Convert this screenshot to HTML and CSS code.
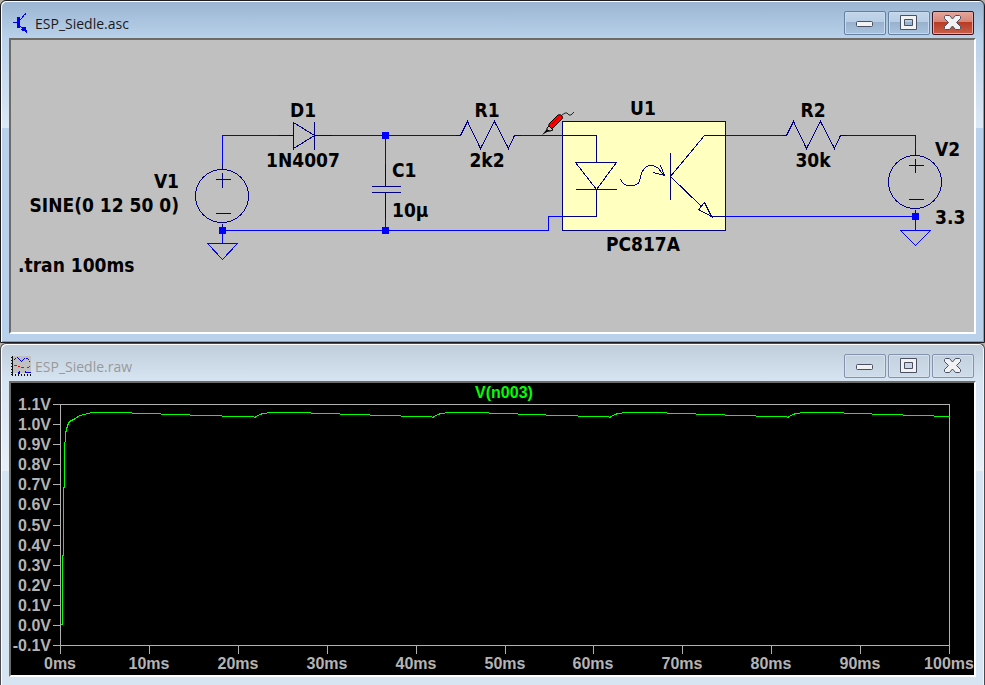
FILE: index.html
```html
<!DOCTYPE html>
<html lang="en">
<head>
<meta charset="utf-8">
<title>ESP_Siedle</title>
<link rel="stylesheet" href="styles.css">
</head>
<body>
<main class="desktop">
  <section class="window window-active">
    <header class="titlebar">
      <svg class="app-icon" viewBox="0 0 20 20" aria-hidden="true">
        <g fill="#0000f0" shape-rendering="crispEdges">
          <path d="M2 9h5v1H2zM6 4h3v11H6zM9 6h1v1H9zM10 5h1v1h-1zM11 4h1v1h-1zM11 3h2v1h-2zM12 2h1v1h-1zM13 1h2v1h-2zM14 0h1v1h-1z"/>
          <path d="M9 13h1v1H9zM10 14h2v1h-2zM11 14h3v4h-3zM10 16h2v1h-2zM14 15h1v4h-1zM15 17h1v3h-1zM13 17h2v1h-2zM14 14h1v1h-1z"/>
        </g>
      </svg>
      <h1 class="title">ESP_Siedle.asc</h1>
      <div class="controls">
        <button class="control" type="button" aria-label="Minimize"><svg viewBox="0 0 42 24"><rect x="12.500" y="10.500" width="16" height="5" rx="1" class="glyph"/></svg></button>
        <button class="control" type="button" aria-label="Maximize"><svg viewBox="0 0 42 24"><path class="glyph" fill-rule="evenodd" d="M12.500 4.500h16v14h-16zM16.500 8.500h8v6h-8z"/></svg></button>
        <button class="control close" type="button" aria-label="Close"><svg viewBox="0 0 42 24"><path class="glyph" d="M13.500 4.500h4l3 3.500 3-3.500h4l1 1v2l-4 4 4 4v2l-1 1h-4l-3-3.500-3 3.500h-4l-1-1v-2l4-4-4-4v-2z"/></svg></button>
      </div>
    </header>
    <div class="view">
      <svg class="drawing schematic" viewBox="11 40 963 292" role="img" aria-label="Schematic">
        <g transform="translate(.5 .5)">
          <rect class="chip" x="562" y="121" width="163" height="109"/>
          <g class="wire">
            <path d="M222 163V135H277M331 135H455M520 135H562M222 230H548V216H562M385 135V163M385 218V230M725 135H782M846 135H915V149M725 216H915"/>
            <path d="M222 230V243M207 243H237L222 259ZM915 216V230M900 230H930L915 245Z"/>
          </g>
          <g class="part">
            <circle cx="221.500" cy="195.500" r="26.500"/>
            <path d="M222 163V169M215 179H230M222 172V187M215 213H230M222 223V230"/>
            <path d="M277 135H293M293 121V149M293 122L314 135L293 148M314 121V149M314 135H331"/>
            <path d="M385 163V186M371 186H400M371 192H400M385 192V218"/>
            <path d="M455 135H460L467 121L480 148L494 121L508 148L514 135H520"/>
            <path d="M562 135H596V162M575 162H616L596 189ZM575 189H616M596 189V216H562"/>
            <path d="M620 179Q623 185 628 185H631C643 185 637 175 644 168C648 163 655 165 658 168C660 170 661 173 664 175M660 165L664 175L653 172"/>
            <path d="M670 152V199M725 135H704L670 176L701 206M711 216L704 202L698 209ZM711 216H725"/>
            <path d="M782 135H786L793 121L806 148L820 121L834 148L840 135H846"/>
            <circle cx="914.500" cy="181.500" r="26.500"/>
            <path d="M915 149V155M908 165H923M915 158V172M908 199H923M915 209V216"/>
          </g>
        </g>
        <path class="node" d="M219 227h7v7h-7zM382 132h7v7h-7zM382 227h7v7h-7zM912 213h7v7h-7z"/>
        <g class="probe">
          <path d="M542 135l5-6 4 2-4 1z" fill="#000"/>
          <path d="M549 124l9-9q3-1 4 1t0 3l-9 9q-2 1-3 1-2-2-1-5z" fill="#f00" stroke="#000"/>
          <path d="M547 128l2-2 4 4-3 1-3-1z" fill="#c0c0c0" stroke="#000"/>
          <path d="M552 124l7-7" stroke="#000" stroke-dasharray="1 1"/>
          <path d="M562 115l3-2h2l2 2h2l3-3" fill="none" stroke="#222"/>
        </g>
        <g class="labels">
          <text x="303" y="117" class="mid">D1</text>
          <text x="303" y="167" class="mid">1N4007</text>
          <text x="179" y="188" class="end">V1</text>
          <text x="179" y="212" class="end">SINE(0 12 50 0)</text>
          <text x="18" y="272">.tran 100ms</text>
          <text x="392" y="177">C1</text>
          <text x="392" y="217">10µ</text>
          <text x="487" y="117" class="mid">R1</text>
          <text x="487" y="167" class="mid">2k2</text>
          <text x="643" y="115" class="mid">U1</text>
          <text x="643" y="251" class="mid">PC817A</text>
          <text x="813" y="117" class="mid">R2</text>
          <text x="813" y="167" class="mid">30k</text>
          <text x="935" y="156">V2</text>
          <text x="935" y="224">3.3</text>
        </g>
      </svg>
    </div>
  </section>

  <section class="window window-inactive">
    <header class="titlebar">
      <svg class="app-icon" viewBox="0 0 20 20" aria-hidden="true">
        <g shape-rendering="crispEdges">
          <path fill="#c0c0c0" d="M1 0h19v17H1z"/>
          <path fill="#111" d="M1 0h1v20H1zM0 1h1v1H0zM0 4h1v1H0zM0 7h1v1H0zM0 10h1v1H0zM0 13h1v1H0zM0 16h1v1H0zM0 18h1v1H0zM4 18h1v2H4zM7 18h1v2H7zM10 18h1v2h-1zM13 18h1v2h-1zM16 18h1v2h-1zM19 18h1v2h-1z"/>
          <path fill="#0000e8" d="M3 3h1v1H3zM4 2h1v1H4zM6 1h1v1H6zM7 2h1v1H7zM8 3h1v1H8zM9 4h1v1H9zM10 5h1v1h-1zM11 4h1v1h-1zM12 3h1v1h-1zM13 2h1v1h-1zM15 2h2v1h-2zM17 3h1v1h-1zM18 5h1v1h-1zM7 16h2v2H7zM8 15h1v1H8zM14 15h1v1h-1zM14 16h6v1h-6z"/>
          <path fill="#f00" d="M3 9h3v1H3zM7 10h2v1H7zM10 11h3v1h-3zM16 11h2v1h-2zM18 10h1v1h-1z"/>
        </g>
      </svg>
      <h1 class="title">ESP_Siedle.raw</h1>
      <div class="controls">
        <button class="control" type="button" aria-label="Minimize"><svg viewBox="0 0 42 24"><rect x="12.500" y="10.500" width="16" height="5" rx="1" class="glyph"/></svg></button>
        <button class="control" type="button" aria-label="Maximize"><svg viewBox="0 0 42 24"><path class="glyph" fill-rule="evenodd" d="M12.500 4.500h16v14h-16zM16.500 8.500h8v6h-8z"/></svg></button>
        <button class="control" type="button" aria-label="Close"><svg viewBox="0 0 42 24"><path class="glyph" d="M13.500 4.500h4l3 3.500 3-3.500h4l1 1v2l-4 4 4 4v2l-1 1h-4l-3-3.500-3 3.500h-4l-1-1v-2l4-4-4-4v-2z"/></svg></button>
      </div>
    </header>
    <div class="view">
      <svg class="drawing plot" viewBox="11 383 963 292" role="img" aria-label="Plot of V(n003)">
        <g transform="translate(.5 .5)">
          <path class="axis" d="M52 404H949V653M60 404V653M52 645H949M52 424H60M52 444H60M52 464H60M52 484H60M52 504H60M52 525H60M52 545H60M52 565H60M52 585H60M52 605H60M52 625H60M149 645V653M238 645V653M327 645V653M416 645V653M505 645V653M593 645V653M682 645V653M771 645V653M860 645V653"/>
          <path class="trace" d="M60 624H62V555H63V487H64V450L65 433L67 425L69 421L75 418L79 415L84 414L91 412H131L132 413H160L161 414H189L190 415H221L222 416H253L254 417L256 416L259 414L263 413L270 412H310L311 413H339L340 414H369L370 415H400L401 416H431L432 417L434 416L437 414L441 413L448 412H488L489 413H517L518 414H545L546 415H577L578 416H608L609 417L611 416L614 414L618 413L626 412H666L667 413H695L696 414H724L725 415H755L756 416H786L787 417L789 416L792 414L796 413L804 412H843L844 413H871L872 414H902L903 415H933L934 416H949"/>
        </g>
        <g class="ticks">
          <text x="51" y="410" class="end">1.1V</text>
          <text x="51" y="430" class="end">1.0V</text>
          <text x="51" y="450" class="end">0.9V</text>
          <text x="51" y="470" class="end">0.8V</text>
          <text x="51" y="490" class="end">0.7V</text>
          <text x="51" y="510" class="end">0.6V</text>
          <text x="51" y="531" class="end">0.5V</text>
          <text x="51" y="551" class="end">0.4V</text>
          <text x="51" y="571" class="end">0.3V</text>
          <text x="51" y="591" class="end">0.2V</text>
          <text x="51" y="611" class="end">0.1V</text>
          <text x="51" y="631" class="end">0.0V</text>
          <text x="51" y="651" class="end">-0.1V</text>
          <text x="60" y="669" class="mid">0ms</text>
          <text x="149" y="669" class="mid">10ms</text>
          <text x="238" y="669" class="mid">20ms</text>
          <text x="327" y="669" class="mid">30ms</text>
          <text x="416" y="669" class="mid">40ms</text>
          <text x="505" y="669" class="mid">50ms</text>
          <text x="593" y="669" class="mid">60ms</text>
          <text x="682" y="669" class="mid">70ms</text>
          <text x="771" y="669" class="mid">80ms</text>
          <text x="860" y="669" class="mid">90ms</text>
          <text x="949" y="669" class="mid">100ms</text>
          <text x="504" y="398" class="mid trace-name">V(n003)</text>
        </g>
      </svg>
    </div>
  </section>
</main>
</body>
</html>
```
FILE: styles.css
```css
* { box-sizing: border-box; }

body {
  margin: 0;
  background: #b4b0a6;
  font-family: "Open Sans", "Noto Sans", sans-serif;
}

.desktop {
  display: flex;
  flex-direction: column;
}

.window {
  padding: 0 8px 8px;
  border: 1px solid #1c1c20;
  border-radius: 6px 6px 0 0;
}

.window-active {
  background: linear-gradient(#9ab4d1 0, #b9d1ea 37px, #dce8f5 127px, #b9d1ea 127px);
  box-shadow: inset 1px 1px 0 #fff, inset -1px -1px 0 #2cc4e4;
}

.window-inactive {
  border-color: #4a4a50;
  border-bottom: 0;
  background: linear-gradient(#bfcddb 0, #d7e4f2 37px, #e8f0f8 127px, #d7e4f2 127px);
  box-shadow: inset 1px 1px 0 #fff, inset -1px 0 0 #eef4fa;
}

.titlebar {
  display: flex;
  align-items: flex-start;
  height: 37px;
  padding: 0 2px;
}

.app-icon {
  width: 20px;
  height: 20px;
  margin-top: 12px;
}

.title {
  flex: 1;
  margin: 13px 0 0 4px;
  font-size: 14px;
  font-weight: 400;
  line-height: 20px;
  color: #1a1a1a;
}

.window-inactive .title { color: #999; }

.controls {
  display: flex;
  gap: 2px;
  margin-top: 10px;
}

.control {
  width: 42px;
  height: 24px;
  padding: 0;
  border: 1px solid #66809f;
  border-radius: 2px;
  background: linear-gradient(#c3d6ea 0, #b7cde4 10px, #98b2ce 10px, #a9c3df 100%);
  box-shadow: inset 0 0 0 1px #c8dbee;
}

.control svg {
  display: block;
  width: 42px;
  height: 24px;
  margin: -1px;
}

.close {
  border-color: #431321;
  background: linear-gradient(#e5a69b 0, #d68577 10px, #b83a22 10px, #c8604a 100%);
  box-shadow: inset 0 0 0 1px #e3a99d;
}

.window-inactive .control {
  border-color: #8493ab;
  background: linear-gradient(#c4d1df, #cfdcea);
  box-shadow: inset 0 0 0 1px #d5e1ed;
}

.glyph {
  fill: #f2f2f2;
  stroke: #4a5062;
}

.view {
  border: 2px solid;
  border-color: #6e6a66 #fff #fff #6e6a66;
}

.drawing {
  display: block;
  width: 100%;
  height: auto;
}

.schematic { background: #c0c0c0; }
.plot { background: #000; }

.wire, .part, .chip, .axis, .trace {
  fill: none;
  stroke-width: 1;
  shape-rendering: crispEdges;
}

.wire { stroke: #0000ff; }
.part { stroke: #000080; }
.chip { fill: #ffffc0; stroke: #000080; }
.node { fill: #0000ff; }
.axis { stroke: #b0b0b0; }
.trace { stroke: #00ff00; }

.labels {
  font-family: "DejaVu Sans Condensed", "Noto Sans", sans-serif;
  font-size: 19px;
  font-weight: 700;
}

.ticks {
  font-family: "Liberation Sans", Arial, sans-serif;
  font-size: 16px;
  font-weight: 700;
  fill: #b4b4b4;
}

.mid { text-anchor: middle; }
.end { text-anchor: end; }
.trace-name { fill: #00ff00; }
```
